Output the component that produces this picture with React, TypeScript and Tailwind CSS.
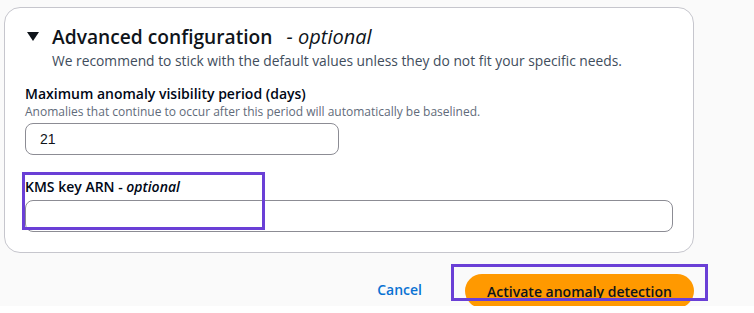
import React from "react";

export default function App() {
  return (
    <div className="w-[754px] h-[313px] bg-white overflow-hidden" style={{ fontFamily: '"Open Sans", "Noto Sans", sans-serif' }}>
      <div className="relative h-[306px] bg-[#fafafa] overflow-hidden pt-[7px] pl-[4px]">
        <div className="w-[690px] h-[246px] bg-white border border-[#c6c6cd] rounded-[16px] pl-[20px] pr-[19px]">
          <div className="flex items-center h-[28px] mt-[15px]">
            <svg width="12" height="10" viewBox="0 0 12 10" className="ml-[2px] mr-[13px]">
              <polygon points="0,0 12,0 6,9" fill="#0f141a" />
            </svg>
            <span className="text-[19.2px] font-semibold text-[#0f141a] leading-[28px]">Advanced configuration</span>
            <span className="text-[20px] italic text-[#0f141a] ml-[14px] leading-[28px]">- optional</span>
          </div>
          <div className="pl-[27px] text-[13.8px] leading-[20px] text-[#414d5c]">
            We recommend to stick with the default values unless they do not fit your specific needs.
          </div>
          <div className="mt-[13px] text-[14px] font-semibold leading-[20px] text-[#000716]">
            Maximum anomaly visibility period (days)
          </div>
          <div className="text-[12px] leading-[16px] text-[#5f6b7a]">
            Anomalies that continue to occur after this period will automatically be baselined.
          </div>
          <div className="mt-[3px] w-[314px] h-[32px] border border-[#8c8c94] rounded-[8px] flex items-center pl-[14px] text-[14px] text-[#0f141a]" style={{ fontFamily: '"Liberation Sans", Arial, sans-serif' }}>
            21
          </div>
          <div className="mt-[22px] text-[14px] font-semibold leading-[20px] text-[#000716]">
            KMS key ARN - <i>optional</i>
          </div>
          <div className="mt-[3px] w-[648px] h-[32px] border border-[#8c8c94] rounded-[8px]" />
        </div>
        <div className="flex items-center justify-end mt-[21px] pr-[60px]">
          <span className="text-[14px] font-semibold text-[#0972d3] mr-[43px] -mt-[4px]">Cancel</span>
          <div className="w-[229px] h-[34px] rounded-full bg-[#ff9900] flex items-center justify-center text-[14px] font-semibold text-[#0f141a]">
            Activate anomaly detection
          </div>
        </div>
        <div className="absolute left-[22px] top-[172px] w-[243px] h-[58px] border-[3px] border-[#6a3fd6]" />
        <div className="absolute left-[451px] top-[264px] w-[257px] h-[37px] border-[3px] border-[#6a3fd6]" />
      </div>
    </div>
  );
}
